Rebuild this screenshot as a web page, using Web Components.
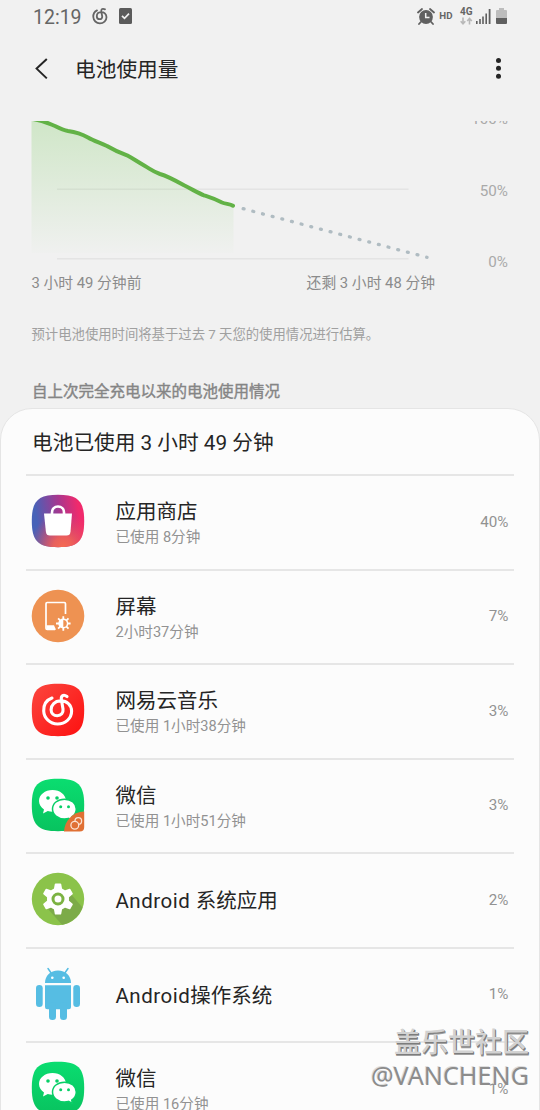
<!DOCTYPE html>
<html lang="zh-CN">
<head>
<meta charset="utf-8">
<title>电池使用量</title>
<style>
html,body{margin:0;padding:0;background:#f1f1f1}
body{width:540px;height:1110px;overflow:hidden;font-family:Roboto,"Noto Sans CJK SC",sans-serif;color:#252525}
</style>
</head>
<body>
<battery-page></battery-page>
<script>
const define = (name, html) => {
  const t = document.createElement('template');
  t.innerHTML = html;
  customElements.define(name, class extends HTMLElement {
    constructor() {
      super();
      this.attachShadow({ mode: 'open' }).append(t.content.cloneNode(true));
    }
  });
};

define('status-bar', `
<style>
:host{display:flex;height:34px;box-sizing:border-box;padding:0 32px 0 33px;align-items:center;color:#656565}
.time{font-size:19.5px;line-height:34px;width:58.5px;margin-top:1px}
svg{display:block;flex:none}
.sp{flex:1}
.hd{font-size:9.7px;font-weight:700;margin:-3px 7.5px 0 4px;line-height:12px}
.net{width:13px;height:22px;margin-right:3px}
.net b{display:block;font-size:10px;line-height:12px;height:11px}
</style>
<span class="time">12:19</span>
<svg width="16" height="18" viewBox="0 0 16 18" fill="none" stroke="#656565" stroke-width="1.8" stroke-linecap="round" style="margin-top:-2px"><path d="M5 3.400C2.600 4.600 1.100 7 1.300 10c.2 3.600 3 6.300 6.600 6.300s6.600-2.600 6.600-6.100c0-3.300-2.500-5.300-5.500-5.100-2.600.1-4.200 2-4.200 4.100 0 1.700 1.300 3 2.900 3s2.800-1.300 2.500-3L9.300 4.700C8.900 2.200 10.600 1 13 2.400"/></svg>
<svg width="13" height="16" viewBox="0 0 13 16" style="margin:-2px 0 0 11px"><rect width="13" height="16" rx="1.500" fill="#5b5b5b"/><path d="M3 7.800l2.500 2.500L10 5.600" fill="none" stroke="#f1f1f1" stroke-width="1.700"/></svg>
<span class="sp"></span>
<svg width="18" height="17" viewBox="0 0 18 17" style="margin-top:-2px"><circle cx="9" cy="9" r="6.900" fill="#606060"/><path d="M1 4.500L5 1M17 4.500L13 1M3.800 14L2 16M14.200 14L16 16" stroke="#606060" stroke-width="1.800" stroke-linecap="round"/><path d="M8.700 5v4.500h3.800" fill="none" stroke="#f1f1f1" stroke-width="1.500"/></svg>
<span class="hd">HD</span>
<div class="net"><b>4G</b><svg width="13" height="8" viewBox="0 0 13 8" fill="none" stroke="#b8b8b8" stroke-width="1.600"><path d="M3 .5v6M.7 4.200L3 6.700l2.300-2.500M9.500 7.500v-6M7.200 4l2.300-2.500L11.800 4"/></svg></div>
<svg width="15" height="15" viewBox="0 0 15 15" fill="#5f5f5f" style="margin-top:-2px"><path d="M0 12h1.600v3H0zM3.200 10h1.600v5H3.200zM6.200 7.500h1.600V15H6.200zM9.400 4.500h1.600V15H9.400zM12.700 0h1.800v15h-1.800z"/></svg>
<svg width="11" height="16" viewBox="0 0 11 16" style="margin:-2px 1px 0 5px"><path d="M3 0h5v2h2a1 1 0 0 1 1 1v7H0V3a1 1 0 0 1 1-1h2z" fill="#bdbdbd"/><path d="M0 10h11v5a1 1 0 0 1-1 1H1a1 1 0 0 1-1-1z" fill="#606060"/></svg>
`);

define('app-bar', `
<style>
:host{display:flex;height:87px;padding:0 38.500px 0 35px;align-items:flex-start}
.t{font-size:20.700px;line-height:30px;margin:21px 0 0 26px;flex:1}
svg{display:block}
</style>
<svg width="14" height="22" viewBox="0 0 14 22" style="margin-top:24px"><path d="M11.800 1L1.600 10.600l10.200 9.800" fill="none" stroke="#252525" stroke-width="2"/></svg>
<div class="t"><slot></slot></div>
<svg width="8" height="22" viewBox="0 0 8 22" fill="#252525" style="margin-top:22.500px"><circle cx="4.500" cy="3.400" r="2.500"/><circle cx="4.500" cy="11.300" r="2.500"/><circle cx="4.500" cy="19.200" r="2.500"/></svg>
`);

define('usage-chart', `
<style>
:host{display:block;color:#8b8b8b}
.plot{display:flex;justify-content:space-between;height:151px;padding:0 32px 0 0;overflow:hidden}
svg{display:block}
.y{display:flex;flex-direction:column;gap:51.500px;margin-top:-12px;text-align:right;font-size:15.200px;line-height:20px;color:#a9a9a9}
.x{display:flex;justify-content:space-between;padding:0 105px 0 31.500px;font-size:14.800px;line-height:22px;height:22px}
</style>
<div class="plot">
<svg width="440" height="150" viewBox="0 121 440 150" fill="none">
<defs><linearGradient id="g" x1="0" y1="121" x2="0" y2="253" gradientUnits="userSpaceOnUse"><stop stop-color="#6cc64c" stop-opacity=".25"/><stop offset="1" stop-color="#6cc64c" stop-opacity=".01"/></linearGradient></defs>
<path d="M57 189.300H408.500M57 258.700H408.500" stroke="#e4e4e4" stroke-width="1.500"/>
<path d="M31.500 121H43L64 130 80 133 95 141 106 145 120 152 130 156.500 153 171 170 177 198 192 215 198.500 233.500 206V253H31.500z" fill="url(#g)"/>
<path d="M33 119C45 121 50 124 55 126 61 129 64 130.300 68 131 77 132.200 81 133.500 88 137.500 94 141 99 142.300 107 146 112 149 118 152 127 155.300 133 158.500 137 161.500 145 166 151 169.500 153 171.500 160 174 167 176 171 178 184 185.300 194 190.300 198 193 204 195.300 211 197.600 214 198.500 222 202.500 226 204 230 204 233 205.700" stroke="#62b246" stroke-width="4" stroke-linecap="round"/>
<path d="M243.200 208.700L427 257.300" stroke="#b0bcc2" stroke-width="3.300" stroke-linecap="round" stroke-dasharray=".9 9.090"/>
</svg>
<div class="y"><span>100%</span><span>50%</span><span>0%</span></div>
</div>
<div class="x"><span>3 小时 49 分钟前</span><span>还剩 3 小时 48 分钟</span></div>
`);

define('usage-row', `
<style>
:host{display:flex;height:94.500px;box-sizing:border-box;margin:0 25px;padding:0 5.500px 0 4.500px;border-top:2px solid #e6e6e6;align-items:center}
.icon{width:54px;height:54px;margin:-2px 31px 0 0;flex:none}
.text{flex:1;margin-top:3px}
.t{font-size:20.500px;line-height:26px}
.s{font-size:14.600px;line-height:22px;color:#929292;margin-top:1px}
.p{font-size:15.200px;line-height:20px;color:#929292;margin-top:-1px}
</style>
<div class="icon"><slot name="icon"></slot></div>
<div class="text"><div class="t"><slot></slot></div><div class="s"><slot name="sub"></slot></div></div>
<div class="p"><slot name="pct"></slot></div>
`);

const squircle = 'M27 .8C47 .8 53.200 7 53.200 27S47 53.200 27 53.200 .8 47 .8 27 7 .8 27 .8z';
const wechat = `<defs><linearGradient id="w" x1="0" y1="0" x2="0" y2="1"><stop stop-color="#0add70"/><stop offset="1" stop-color="#08c35f"/></linearGradient></defs><path d="${squircle}" fill="url(#w)"/>
<path d="M21.500 12c-7.500 0-13.500 4.700-13.500 11 0 3.500 2 6.500 5 8.500l-1 4 4.800-2.400c1.500.5 3 .7 4.700.7 7.500 0 13.500-4.700 13.500-10.800S29 12 21.500 12z" fill="#fff"/>
<path d="M33.500 21.200c-6.900 0-12 4.200-12 9.800s5.100 9.900 12 9.900c1.500 0 2.800-.2 4-.5l4 2-.8-3.300c2.700-1.800 4.600-4.700 4.600-8.100 0-5.600-5-9.800-11.800-9.800z" fill="#fff" stroke="#08cf67" stroke-width="1.500"/>
<g fill="#08cf67"><circle cx="17" cy="20" r="1.800"/><circle cx="26" cy="20" r="1.800"/><circle cx="29.700" cy="28.700" r="1.500"/><circle cx="37.500" cy="28.700" r="1.500"/></g>`;
const tooth = 'M23.800 12q.2-.6.800-.6h4.800q.6 0 .8.600l1.200 6.500h-8.800z';
const teeth = [0, 60, 120, 180, 240, 300].map(a => `<path d="${tooth}" transform="rotate(${a} 27 27)"/>`).join('');
const art = {
  store: `<defs><linearGradient id="a" x1="0" y1=".45" x2="1" y2=".3"><stop offset=".08" stop-color="#4762b8"/><stop offset=".55" stop-color="#a8368e"/><stop offset=".9" stop-color="#f02a6c"/></linearGradient><radialGradient id="b" cx=".6" cy="1" r=".65"><stop stop-color="#f66b52"/><stop offset=".3" stop-color="#f26356" stop-opacity=".9"/><stop offset="1" stop-color="#ee4560" stop-opacity="0"/></radialGradient></defs><path d="${squircle}" fill="url(#a)"/><path d="${squircle}" fill="url(#b)"/>
<path d="M13 19.500h28l-1.500 18.300c-.3 2.700-1.500 3.800-4 3.800H19c-2.600 0-3.800-1.200-4.100-3.800z" fill="#fff"/><path d="M21 21v-2.500c0-3.600 2.500-6 6-6s6 2.400 6 6V21" fill="none" stroke="#fff" stroke-width="2.600"/>`,
  screen: `<circle cx="27" cy="27" r="26.300" fill="#ee9252"/><path d="M34.500 25V14.700q0-1.200-1.200-1.200H16.200q-1.200 0-1.200 1.200v24.600q0 1.200 1.200 1.200H24" fill="none" stroke="#fff" stroke-width="1.700"/><path d="M15.500 36.200h7.500l2 4.500h-9.500z" fill="#fff"/><path d="M32.300 27.200v14.600M25 34.500h14.600M27.100 29.300l10.400 10.400M37.500 29.300L27.100 39.700" stroke="#fff" stroke-width="1.800"/><circle cx="32.300" cy="34.500" r="5" fill="#fff"/><path d="M32.300 31a3.500 3.500 0 0 1 0 7z" fill="#ee9252"/>`,
  music: `<defs><linearGradient id="m" x1="0" y1="0" x2="1" y2="1"><stop stop-color="#fb463e"/><stop offset="1" stop-color="#fd1010"/></linearGradient></defs><path d="${squircle}" fill="url(#m)"/><path d="M21 15C15.500 17 12.500 21.800 12.700 28c.3 7.200 6.300 13 13.900 13S40.600 35.400 40.600 28.300c0-6.300-4.800-10.600-11.200-10.400-5.600.2-9.300 4-9.300 8.800 0 3.500 2.700 6 6.100 6 4 0 6.300-2.800 5.800-6.600l-1.600-9.300c-.7-4.200 2.200-5.800 5.600-3.300" fill="none" stroke="#fff" stroke-width="3.100" stroke-linecap="round"/>`,
  wechat,
  dual: wechat + `<path d="M53.200 33.500V49q0 4.500-4.500 4.500H33C33.500 43 41.500 34 53.200 33.500z" fill="#e07034"/><g fill="none" stroke="#fbe2d2" stroke-width="1.300"><circle cx="47.300" cy="43" r="3.300"/><circle cx="43.800" cy="47.200" r="3.900" fill="#e07034"/></g>`,
  gear: `<circle cx="27" cy="27" r="26.200" fill="#8bc34a"/><path d="M17 37l14 15.800c9-1.500 17-8 20.500-17.300L39 21z" fill="#7cab48"/><g fill="#fff"><circle cx="27" cy="27" r="11"/>${teeth}</g><circle cx="27" cy="27" r="5" fill="#fff" stroke="#7cb342" stroke-width="3"/>`,
  robot: `<g fill="#56bde3"><path d="M14 16C14 8.500 19.500 3.500 27 3.500S40 8.500 40 16z"/><path d="M19.800 5.500L17 1.500M34.200 5.500L37 1.500" stroke="#56bde3" stroke-width="1.500" stroke-linecap="round"/><path d="M14 18.300h26v21.500q0 2.500-2.500 2.500h-21Q14 42.300 14 39.800z"/><rect x="5" y="18" width="6.700" height="22" rx="3.300"/><rect x="42.300" y="18" width="6.700" height="22" rx="3.300"/><rect x="18" y="35" width="7" height="18" rx="3.300"/><rect x="29" y="35" width="7" height="18" rx="3.300"/></g><circle cx="21.300" cy="10.800" r="1.300" fill="#fff"/><circle cx="32.700" cy="10.800" r="1.300" fill="#fff"/>`
};
customElements.define('app-icon', class extends HTMLElement {
  constructor() {
    super();
    this.attachShadow({ mode: 'open' });
  }
  connectedCallback() {
    this.shadowRoot.innerHTML = `<style>:host{display:block;width:54px;height:54px}svg{display:block}</style><svg width="54" height="54" viewBox="0 0 54 54">${art[this.getAttribute('name')]}</svg>`;
  }
});

define('usage-card', `
<style>
:host{display:block;height:760px;box-sizing:border-box;background:#fcfcfc;border:1px solid #e5e5e5;border-radius:32px 32px 0 0}
.h{font-size:20.700px;line-height:30px;height:65px;box-sizing:border-box;padding:18.500px 0 0 31px}
</style>
<div class="h"><slot name="heading"></slot></div>
<slot></slot>
`);

define('community-mark', `
<style>
:host{position:absolute;right:11px;top:1023px;text-align:right;pointer-events:none;white-space:nowrap}
.a{font:500 27px/36px "Noto Sans CJK SC",sans-serif;color:#d2d2d2;text-shadow:1px 1px 0 #7c7c7c,1px 2px 0 #a0a0a0}
.b{font:25.200px/30px "Noto Sans","Noto Sans CJK SC",sans-serif;margin-top:1px;color:#8c8c8c;text-shadow:-1px -1px 0 #dedede}
</style>
<div class="a">盖乐世社区</div><div class="b">@VANCHENG</div>
`);

define('battery-page', `
<style>
:host{display:block;position:relative;width:540px;height:1110px;overflow:hidden;background:#f1f1f1}
.note{font-size:13.350px;line-height:20px;color:#a0a0a0;padding:31px 0 0 31.500px;height:20px}
.sec{font-size:15.500px;line-height:22px;color:#858585;-webkit-text-stroke:.4px #858585;padding:36px 0 0 32px;height:27px}
usage-row span.wide{letter-spacing:.5px}
</style>
<status-bar></status-bar>
<app-bar>电池使用量</app-bar>
<usage-chart></usage-chart>
<div class="note">预计电池使用时间将基于过去 7 天您的使用情况进行估算。</div>
<div class="sec">自上次完全充电以来的电池使用情况</div>
<usage-card>
<span slot="heading">电池已使用 3 小时 49 分钟</span>
<usage-row><app-icon slot="icon" name="store"></app-icon>应用商店<span slot="sub">已使用 8分钟</span><span slot="pct">40%</span></usage-row>
<usage-row><app-icon slot="icon" name="screen"></app-icon>屏幕<span slot="sub">2小时37分钟</span><span slot="pct">7%</span></usage-row>
<usage-row><app-icon slot="icon" name="music"></app-icon>网易云音乐<span slot="sub">已使用 1小时38分钟</span><span slot="pct">3%</span></usage-row>
<usage-row><app-icon slot="icon" name="dual"></app-icon>微信<span slot="sub">已使用 1小时51分钟</span><span slot="pct">3%</span></usage-row>
<usage-row><app-icon slot="icon" name="gear"></app-icon><span class="wide">Android </span>系统应用<span slot="pct">2%</span></usage-row>
<usage-row><app-icon slot="icon" name="robot"></app-icon><span class="wide">Android</span>操作系统<span slot="pct">1%</span></usage-row>
<usage-row><app-icon slot="icon" name="wechat"></app-icon>微信<span slot="sub">已使用 16分钟</span><span slot="pct">1%</span></usage-row>
</usage-card>
<community-mark></community-mark>
`);
</script>
</body>
</html>
